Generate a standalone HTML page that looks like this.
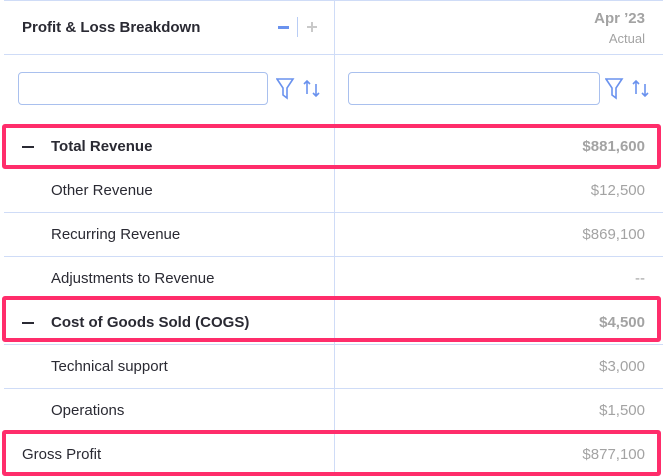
<!DOCTYPE html>
<html><head><style>
body{margin:0;width:663px;height:476px;overflow:hidden;background:#fff;font-family:"Liberation Sans",sans-serif;position:relative}
.h{position:absolute;left:4px;right:0;height:1px;background:#cfdcf7}
.v{position:absolute;left:334px;top:0;width:1px;height:476px;background:#cfdcf7}
.t{position:absolute;font-size:15px;color:#2a2a33;white-space:nowrap}
.r{position:absolute;right:18px;font-size:15px;color:#a3a3a3;white-space:nowrap;text-align:right}
.b{font-weight:bold}
.box{position:absolute;left:2px;width:651px;border:4px solid #ff2d6b;border-radius:3px}
.inp{position:absolute;top:72px;height:33px;border:1px solid #a9c0ee;border-radius:4px;box-sizing:border-box}
.dash{position:absolute;left:22px;width:12px;height:2px;background:#2a2a33}
</style></head><body>
<div class="h" style="top:0"></div>
<div class="h" style="top:54px"></div>
<div class="h" style="top:212px"></div>
<div class="h" style="top:256px"></div>
<div class="h" style="top:344px"></div>
<div class="h" style="top:388px"></div>
<div class="v"></div>
<div class="t b" style="left:22px;top:19px">Profit &amp; Loss Breakdown</div>
<div style="position:absolute;left:278px;top:26px;width:11px;height:3px;background:#6a92ee"></div>
<div style="position:absolute;left:297px;top:17px;width:1px;height:20px;background:#b9cdf5"></div>
<div style="position:absolute;left:307px;top:26px;width:10px;height:2px;background:#c9c9c9"></div>
<div style="position:absolute;left:311px;top:22px;width:2px;height:10px;background:#c9c9c9"></div>
<div class="r b" style="top:10px;font-size:15px">Apr ’23</div>
<div class="r" style="top:31px;font-size:13px">Actual</div>
<div class="inp" style="left:18px;width:250px"></div>
<div class="inp" style="left:348px;width:252px"></div>
<svg style="position:absolute;left:276px;top:78px" width="46" height="22" viewBox="0 0 46 22" fill="none" stroke="#6a92ee" stroke-width="1.6"><path d="M1 1h16l-6 9v10l-4-3v-7z"/><path d="M31 16V3M28 6l3-3 3 3M40 6v12M37 15l3 3 3-3"/></svg>
<svg style="position:absolute;left:605px;top:78px" width="46" height="22" viewBox="0 0 46 22" fill="none" stroke="#6a92ee" stroke-width="1.6"><path d="M1 1h16l-6 9v10l-4-3v-7z"/><path d="M31 16V3M28 6l3-3 3 3M40 6v12M37 15l3 3 3-3"/></svg>
<div class="box" style="top:124px;height:37px"></div>
<div class="box" style="top:296px;height:38px"></div>
<div class="box" style="top:430px;height:38px"></div>
<div class="dash" style="top:146px"></div>
<div class="t b" style="left:51px;top:138px">Total Revenue</div><div class="r b" style="top:138px">$881,600</div>
<div class="t" style="left:51px;top:182px">Other Revenue</div><div class="r" style="top:182px">$12,500</div>
<div class="t" style="left:51px;top:226px">Recurring Revenue</div><div class="r" style="top:226px">$869,100</div>
<div class="t" style="left:51px;top:270px">Adjustments to Revenue</div><div class="r" style="top:270px">--</div>
<div class="dash" style="top:322px"></div>
<div class="t b" style="left:51px;top:314px">Cost of Goods Sold (COGS)</div><div class="r b" style="top:314px">$4,500</div>
<div class="t" style="left:51px;top:358px">Technical support</div><div class="r" style="top:358px">$3,000</div>
<div class="t" style="left:51px;top:402px">Operations</div><div class="r" style="top:402px">$1,500</div>
<div class="t" style="left:22px;top:446px">Gross Profit</div><div class="r" style="top:446px">$877,100</div>
</body></html>
